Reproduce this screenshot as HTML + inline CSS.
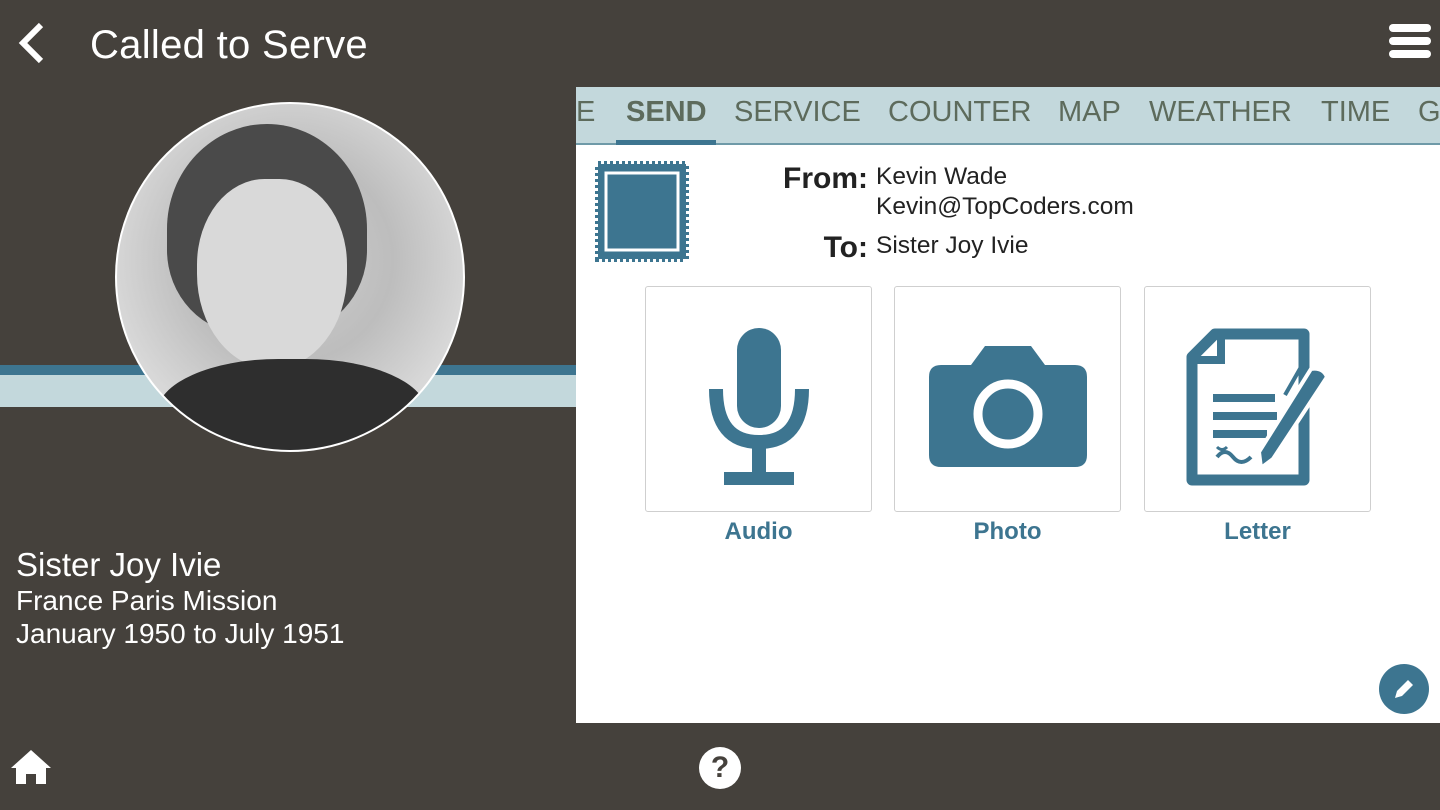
<!DOCTYPE html>
<html><head><meta charset="utf-8"><style>
*{margin:0;padding:0;box-sizing:border-box}
body{width:1440px;height:810px;background:#45413c;font-family:"Liberation Sans",sans-serif;position:relative;overflow:hidden}
.a{position:absolute}
.tab{position:absolute;top:96px;font-size:29px;color:#5d6b5c}
.card{position:absolute;top:286px;width:227px;height:226px;background:#fff;border:1px solid #cfcfcf;border-radius:3px}
.lbl{position:absolute;top:518px;width:227px;text-align:center;font-weight:bold;font-size:24px;color:#3d7590}
</style></head><body>
<svg class="a" style="left:16px;top:22px" width="30" height="42" viewBox="0 0 30 42"><path d="M25 3 L7 21 L25 39" stroke="#fff" stroke-width="6" fill="none"/></svg>
<div class="a" style="left:90px;top:23px;font-size:40px;color:#fff;letter-spacing:0.3px">Called to Serve</div>
<svg class="a" style="left:1389px;top:24px" width="42" height="34"><rect x="0" y="0" width="42" height="8" rx="4" fill="#fff"/><rect x="0" y="13" width="42" height="8" rx="4" fill="#fff"/><rect x="0" y="26" width="42" height="8" rx="4" fill="#fff"/></svg>
<div class="a" style="left:0;top:365px;width:576px;height:10px;background:#3d7590"></div>
<div class="a" style="left:0;top:375px;width:576px;height:32px;background:#c3d8dc"></div>
<div class="a" style="left:115px;top:102px;width:350px;height:350px;border-radius:50%;border:2px solid #fff;background:radial-gradient(circle at 50% 45%,#cfcfcf 0,#bdbdbd 40%,#d8d8d8 70%,#e6e6e6 100%);overflow:hidden">
<div class="a" style="left:50px;top:20px;width:200px;height:210px;background:#4a4a4a;border-radius:50% 50% 40% 40%"></div>
<div class="a" style="left:80px;top:75px;width:150px;height:190px;background:#d9d9d9;border-radius:45% 45% 50% 50%"></div>
<div class="a" style="left:40px;top:255px;width:270px;height:120px;background:#2e2e2e;border-radius:45% 45% 0 0"></div>
</div>
<div class="a" style="left:16px;top:546px;font-size:33px;color:#fff">Sister Joy Ivie</div>
<div class="a" style="left:16px;top:584px;font-size:28px;color:#fff;line-height:33px">France Paris Mission<br>January 1950 to July 1951</div>
<div class="a" style="left:576px;top:87px;width:864px;height:636px;background:#fff"></div>
<div class="a" style="left:576px;top:87px;width:864px;height:58px;background:#c3d8dc;border-bottom:2px solid #6f9aa8"></div>
<div class="tab" style="left:576px">E</div>
<div class="tab" style="left:626px;font-weight:bold">SEND</div>
<div class="a" style="left:616px;top:140px;width:100px;height:5px;background:#3d7590"></div>
<div class="tab" style="left:734px">SERVICE</div>
<div class="tab" style="left:888px">COUNTER</div>
<div class="tab" style="left:1058px">MAP</div>
<div class="tab" style="left:1149px">WEATHER</div>
<div class="tab" style="left:1321px">TIME</div>
<div class="tab" style="left:1418px">G</div>
<svg class="a" style="left:595px;top:161px" width="94" height="101"><rect x="3" y="3" width="88" height="95" fill="#3d7590" stroke="#3d7590" stroke-width="6" stroke-dasharray="3 3"/><rect x="11" y="12" width="72" height="77" fill="none" stroke="#fff" stroke-width="3"/></svg>
<div class="a" style="left:700px;top:162px;width:168px;text-align:right;font-weight:bold;font-size:30px;color:#222">From:</div>
<div class="a" style="left:700px;top:231px;width:168px;text-align:right;font-weight:bold;font-size:30px;color:#222">To:</div>
<div class="a" style="left:876px;top:162px;font-size:24.5px;color:#222;line-height:30px">Kevin Wade<br>Kevin@TopCoders.com</div>
<div class="a" style="left:876px;top:232px;font-size:24.5px;color:#222">Sister Joy Ivie</div>
<div class="card" style="left:645px"><svg width="227" height="226"><rect x="91" y="41" width="44" height="100" rx="22" fill="#3d7590"/><path d="M70 102 Q70 155 113 155 Q156 155 156 102" stroke="#3d7590" stroke-width="14" fill="none"/><rect x="106" y="155" width="14" height="35" fill="#3d7590"/><rect x="78" y="185" width="70" height="13" fill="#3d7590"/></svg></div>
<div class="lbl" style="left:645px">Audio</div>
<div class="card" style="left:894px"><svg width="227" height="226"><path d="M46 78 Q34 78 34 90 V168 Q34 180 46 180 H180 Q192 180 192 168 V90 Q192 78 180 78 H150 L136 59 H90 L76 78 Z" fill="#3d7590"/><circle cx="113" cy="127" r="30" fill="none" stroke="#fff" stroke-width="9"/></svg></div>
<div class="lbl" style="left:894px">Photo</div>
<div class="card" style="left:1144px"><svg width="227" height="226"><path d="M47 70 L70 47 H159 V193 H47 Z" fill="none" stroke="#3d7590" stroke-width="11" stroke-linejoin="round"/><path d="M47 73 H76 V46" fill="none" stroke="#3d7590" stroke-width="8"/><rect x="68" y="107" width="62" height="8" fill="#3d7590"/><rect x="68" y="125" width="64" height="8" fill="#3d7590"/><rect x="68" y="143" width="54" height="8" fill="#3d7590"/><path d="M72 170 Q80 160 88 170 T106 170" stroke="#3d7590" stroke-width="4" fill="none"/><path d="M72 160 Q77 165 82 160" stroke="#3d7590" stroke-width="3" fill="none"/><path d="M166 82 Q178 80 182 90 L128 172 L116 181 L114 165 Z" fill="#3d7590" stroke="#fff" stroke-width="4"/><path d="M156 80 L140 108" stroke="#3d7590" stroke-width="4"/></svg></div>
<div class="lbl" style="left:1144px">Letter</div>
<div class="a" style="left:1379px;top:664px;width:50px;height:50px;border-radius:50%;background:#3d7590"></div>
<svg class="a" style="left:1391px;top:676px" width="26" height="26"><path d="M4 22 L6 15 L17 4 L22 9 L11 20 Z" fill="#fff"/></svg>
<svg class="a" style="left:10px;top:748px" width="42" height="38"><path d="M21 2 L1 20 L6 20 L6 36 L16 36 L16 26 L26 26 L26 36 L36 36 L36 20 L41 20 Z" fill="#fff"/></svg>
<div class="a" style="left:699px;top:747px;width:42px;height:42px;border-radius:50%;background:#fff;color:#45413c;font-weight:bold;font-size:30px;text-align:center;line-height:42px">?</div>
</body></html>
